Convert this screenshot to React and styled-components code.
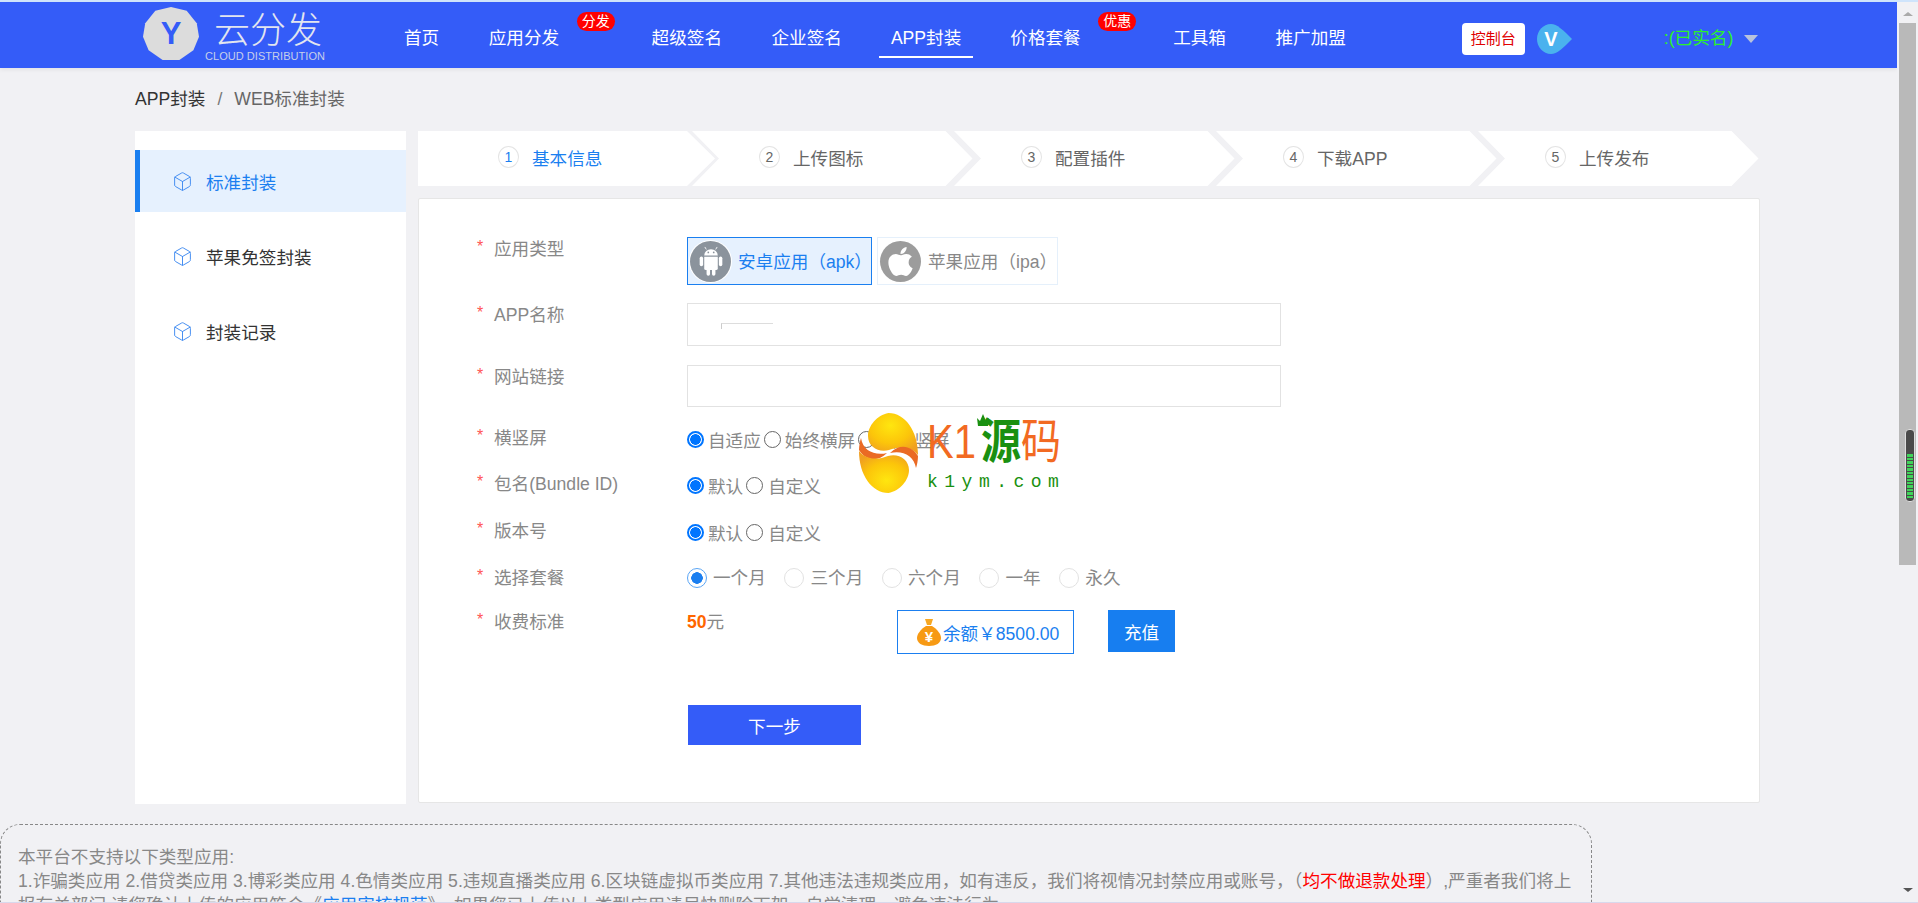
import React from 'react'
import styled, { createGlobalStyle } from 'styled-components'
import { Box } from 'lucide-react'
import { FaApple } from 'react-icons/fa'

const navItems = [
  { text: '首页', gap: 49.5 },
  { text: '应用分发', gap: 92.5 },
  { text: '超级签名', gap: 49.5 },
  { text: '企业签名', gap: 37 },
  { text: 'APP封装', gap: 37, active: true },
  { text: '价格套餐', gap: 92.5 },
  { text: '工具箱', gap: 49.5 },
  { text: '推广加盟', gap: 0 },
]
const navBadges = { 应用分发: '分发', 价格套餐: '优惠' }
const steps = ['基本信息', '上传图标', '配置插件', '下载APP', '上传发布']
const sideItems = ['标准封装', '苹果免签封装', '封装记录']
const periods = ['一个月', '三个月', '六个月', '一年', '永久']

const Global = createGlobalStyle`
  html, body { margin: 0; padding: 0; overflow: hidden; }
  body { font-family: "Liberation Sans", "Noto Sans CJK SC", sans-serif; font-size: 17.6px; background: #f1f1f4; }
  * { box-sizing: border-box; }
`
const Page = styled.div`
  width: 1918px;
  height: 903px;
  display: flex;
  flex-direction: column;
  overflow: hidden;
  background: #f1f1f4;
`
const TopStripe = styled.div`
  height: 2px;
  flex: none;
  background: #cfe4fb;
`
const BottomStripe = styled.div`
  height: 1px;
  flex: none;
  background: #d8d8ec;
`
const Body = styled.div`
  flex: 1;
  min-height: 0;
  display: flex;
`
const Main = styled.div`
  width: 1897px;
  flex: none;
  overflow: hidden;
  position: relative;
`
const Header = styled.header`
  height: 66px;
  background: #345cf8;
  display: flex;
  padding-left: 143px;
  box-shadow: 0 2px 4px rgba(0, 0, 0, 0.06);
`
const Logo = styled.div`
  width: 261px;
  flex: none;
  display: flex;
  padding-top: 5px;
`
const LogoBadge = styled.div`
  width: 56px;
  height: 54px;
  background: #dcdcdc;
  clip-path: polygon(50% 0, 78% 7%, 96% 30%, 100% 55%, 90% 80%, 65% 98%, 35% 98%, 10% 80%, 0 55%, 4% 30%, 22% 7%);
  display: flex;
  align-items: center;
  justify-content: center;
  color: #345cf8;
  font-size: 31px;
  font-weight: 700;
`
const LogoWords = styled.div`
  margin-left: 6px;
  display: flex;
  flex-direction: column;
`
const LogoName = styled.div`
  margin: 5px 0 0 9px;
  font-size: 36px;
  line-height: 38px;
  font-weight: 300;
  color: #e2e5ef;
  white-space: nowrap;
`
const LogoSub = styled.div`
  margin-top: 0;
  font-size: 11px;
  line-height: 12px;
  letter-spacing: 0.05px;
  color: #c6cfea;
  white-space: nowrap;
`
const Nav = styled.nav`
  display: flex;
`
const NavItem = styled.a`
  position: relative;
  height: 56px;
  padding: 24px ${p => (p.$active ? 12 : 0)}px 0;
  margin-right: ${p => p.$gap}px;
  line-height: 24px;
  color: #fff;
  white-space: nowrap;
  border-bottom: 2px solid ${p => (p.$active ? '#fff' : 'transparent')};
`
const NavBadge = styled.span`
  position: absolute;
  left: 88px;
  top: 10px;
  width: 38px;
  height: 19px;
  border-radius: 10px;
  background: #f00;
  color: #fff;
  font-size: 14px;
  line-height: 19px;
  text-align: center;
`
const ConsoleButton = styled.a`
  margin: 21px 0 0 116px;
  width: 63px;
  height: 32px;
  border-radius: 4px;
  background: #fff;
  color: #e00000;
  font-size: 15px;
  line-height: 32px;
  text-align: center;
`
const VipIcon = styled.svg`
  margin: 22px 0 0 12px;
  width: 35px;
  height: 30px;
`
const UserName = styled.span`
  margin: 24px 0 0 92px;
  width: 74px;
  line-height: 24px;
  color: #2cf02c;
  white-space: nowrap;
`
const Caret = styled.span`
  margin: 33px 0 0 6px;
  width: 0;
  height: 0;
  border-left: 7px solid transparent;
  border-right: 7px solid transparent;
  border-top: 8px solid #b8c2dc;
`
const Breadcrumb = styled.div`
  height: 63px;
  padding-left: 135px;
  line-height: 62px;
  color: #666;
`
const Crumb = styled.span`
  color: #333;
`
const CrumbSlash = styled.span`
  margin: 0 12px;
  color: #777;
`
const Columns = styled.div`
  display: flex;
  gap: 12px;
  padding-left: 135px;
`
const Sidebar = styled.aside`
  width: 271px;
  height: 673px;
  flex: none;
  background: #fff;
  padding-top: 19px;
  display: flex;
  flex-direction: column;
  gap: 13px;
`
const SideItem = styled.a`
  height: 62px;
  display: flex;
  align-items: center;
  gap: 13px;
  padding-left: 32px;
  border-left: 5px solid ${p => (p.$active ? '#1a7ff0' : 'transparent')};
  background: ${p => (p.$active ? '#e6f1fe' : 'transparent')};
  color: ${p => (p.$active ? '#1b7ff0' : '#333')};
  svg { color: #3f8af0; }
`
const Content = styled.div`
  width: 1342px;
  flex: none;
`
const Steps = styled.div`
  height: 55px;
  display: flex;
`
const Step = styled.div`
  width: ${p => (p.$first ? 297 : 280.5)}px;
  flex: none;
  margin-left: ${p => (p.$first ? 0 : -18.5)}px;
  margin-right: ${p => (p.$first ? -4.5 : 0)}px;
  padding: 0 0 3px ${p => (p.$first ? 80 : 67)}px;
  display: flex;
  align-items: center;
  gap: 13px;
  background: #fff;
  color: ${p => (p.$first ? '#1b7ff0' : '#666')};
  clip-path: ${p =>
    p.$first
      ? 'polygon(0 0, calc(100% - 28px) 0, 100% 50%, calc(100% - 28px) 100%, 0 100%)'
      : 'polygon(0 0, calc(100% - 27px) 0, 100% 50%, calc(100% - 27px) 100%, 0 100%, 27px 50%)'};
`
const StepNumber = styled.span`
  width: 21px;
  height: 22px;
  border: 1px solid #e4e4e4;
  border-radius: 50%;
  font-size: 14px;
  line-height: 20px;
  text-align: center;
`
const Card = styled.section`
  position: relative;
  margin-top: 12px;
  height: 605px;
  background: #fff;
  border: 1px solid #e6e6e6;
  border-radius: 2px;
  padding: 38px 0 0 58px;
`
const Row = styled.div`
  height: ${p => p.$h}px;
  display: flex;
  align-items: flex-start;
`
const Star = styled.span`
  width: 17px;
  flex: none;
  padding-top: 1px;
  color: #f55;
  font-size: 16px;
  line-height: 18px;
`
const Label = styled.label`
  width: 193px;
  flex: none;
  color: #888;
  line-height: 24px;
  white-space: nowrap;
`
const Tiles = styled.div`
  display: flex;
  gap: 5px;
`
const Tile = styled.div`
  width: ${p => (p.$on ? 185 : 181)}px;
  height: 48px;
  display: flex;
  align-items: center;
  gap: 7px;
  padding: 0 0 2px 2px;
  border: 1px solid ${p => (p.$on ? '#1a7ff0' : '#e5f0fb')};
  background: ${p => (p.$on ? '#e6f1fe' : '#fff')};
  color: ${p => (p.$on ? '#1b7ff0' : '#888')};
  white-space: nowrap;
`
const TileIcon = styled.span`
  width: 41px;
  height: 41px;
  flex: none;
  margin-top: 2px;
  border-radius: 50%;
  background: ${p => (p.$on ? '#8b939c' : '#9c9c9c')};
  box-shadow: 0 0 0 1px #fff;
  color: #fff;
  display: flex;
  align-items: center;
  justify-content: center;
`
const TextInput = styled.input`
  width: 594px;
  height: ${p => p.$h}px;
  border: 1px solid #e2e2e2;
  background: #fff;
  outline: none;
`
const InputWrap = styled.div`
  position: relative;
`
const InputMark = styled.span`
  position: absolute;
  left: 34px;
  top: 20px;
  width: 52px;
  height: 6px;
  border-left: 1px solid #ccc;
  border-top: 1px solid #ddd;
`
const RadioRow = styled.div`
  display: flex;
  align-items: center;
  gap: 3px;
  height: 26px;
  color: #888;
  white-space: nowrap;
`
const RadioItem = styled.label`
  display: flex;
  align-items: center;
  gap: ${p => p.$gap}px;
`
const NativeRadio = styled.input`
  appearance: none;
  margin: 0;
  width: 17px;
  height: 17px;
  border-radius: 50%;
  border: 1px solid #666;
  background: #fff;
  &:checked {
    border: 2px solid #0075ff;
    background: radial-gradient(circle, #0075ff 0 5px, #fff 5.6px);
  }
`
const PeriodRow = styled.div`
  display: flex;
  gap: 18.7px;
  color: #888;
  white-space: nowrap;
`
const PeriodItem = styled.label`
  display: flex;
  align-items: center;
  gap: 6px;
  line-height: 24px;
`
const PeriodRadio = styled.input`
  appearance: none;
  margin: 0;
  width: 20px;
  height: 20px;
  border-radius: 50%;
  border: 1px solid #e2e2e2;
  background: #fff;
  &:checked {
    border: 1.5px solid #5aa5f5;
    background: radial-gradient(circle, #1b7ff0 0 5.5px, #fff 6px);
  }
`
const Price = styled.div`
  width: 210px;
  flex: none;
  line-height: 24px;
  color: #888;
  b { color: #f60; }
`
const Balance = styled.div`
  width: 177px;
  height: 44px;
  flex: none;
  margin-right: 34px;
  display: flex;
  align-items: center;
  padding-left: 18px;
  gap: 1px;
  border: 1px solid #1b7ff0;
  color: #1b7ff0;
  white-space: nowrap;
`
const Recharge = styled.button`
  width: 67px;
  height: 42px;
  border: 0;
  background: #177ef0;
  color: #fff;
  font: inherit;
`
const NextButton = styled.button`
  width: 173px;
  height: 40px;
  margin-left: 211px;
  border: 0;
  background: #345cf8;
  color: #fff;
  font: inherit;
`
const Notice = styled.div`
  width: 1592px;
  margin-top: 20px;
  height: 200px;
  padding: 20px 0 0 17px;
  border: 1px dashed #888;
  border-radius: 20px;
  color: #888;
  line-height: 24px;
  white-space: nowrap;
  a { color: #1b7ff0; }
  em { color: #f00; font-style: normal; }
`
const Watermark = styled.div`
  position: absolute;
  left: 859px;
  top: 407px;
  width: 205px;
  height: 84px;
  display: flex;
`
const MarkWords = styled.div`
  position: relative;
  margin-left: 9px;
  width: 137px;
`
const MarkTitle = styled.div`
  margin-top: 8px;
  height: 46px;
  line-height: 40px;
  font-size: 40px;
  display: flex;
  color: #f26a22;
  white-space: nowrap;
  transform: scaleY(1.2);
  transform-origin: top left;
`
const MarkK = styled.span`
  width: 54px;
  font-weight: 400;
`
const MarkGreen = styled.span`
  color: #1a9010;
  font-weight: 700;
`
const MarkCrown = styled.svg`
  position: absolute;
  left: 49px;
  top: 4px;
  width: 14px;
  height: 14px;
`
const MarkSite = styled.div`
  margin-top: 10px;
  font-family: "Liberation Mono", monospace;
  font-size: 18px;
  line-height: 18px;
  letter-spacing: 6.5px;
  color: #1a9010;
  white-space: nowrap;
`
const Rail = styled.div`
  width: 21px;
  flex: none;
  display: flex;
  flex-direction: column;
  align-items: center;
  position: relative;
`
const ArrowUp = styled.span`
  margin-top: 10px;
  width: 0;
  height: 0;
  border-left: 5px solid transparent;
  border-right: 5px solid transparent;
  border-bottom: 4px solid #aaa;
`
const Track = styled.div`
  margin-top: 7px;
  width: 17px;
  height: 542px;
  background: #b9b9b9;
  position: relative;
`
const Thumb = styled.div`
  position: absolute;
  left: 6px;
  top: 406px;
  width: 10px;
  height: 73px;
  border: 1px solid #ddd;
  border-radius: 4px;
  padding: 24px 1px 3px;
  background: #4a4a4a;
`
const ThumbLines = styled.div`
  height: 100%;
  background: repeating-linear-gradient(#3fd45a 0 2.5px, #4a4a4a 2.5px 3.5px);
`
const ArrowDown = styled.span`
  margin-top: 323px;
  width: 0;
  height: 0;
  border-left: 5px solid transparent;
  border-right: 5px solid transparent;
  border-top: 4px solid #555;
`

const AndroidRobot = () => (
  <svg width="30" height="32" viewBox="0 0 24 26" fill="#fff">
    <path d="M6.5 8.5a5.5 5 0 0 1 11 0z" />
    <path d="M8.2 3.6L7 1.6M15.8 3.6L17 1.6" stroke="#fff" strokeWidth="0.7" />
    <circle cx="9.8" cy="6" r="0.7" fill="#8b939c" />
    <circle cx="14.2" cy="6" r="0.7" fill="#8b939c" />
    <path d="M6.5 9.5h11v9.5a1.4 1.4 0 0 1-1.4 1.4H7.9a1.4 1.4 0 0 1-1.4-1.4z" />
    <rect x="2.8" y="9.3" width="2.8" height="8" rx="1.4" />
    <rect x="18.4" y="9.3" width="2.8" height="8" rx="1.4" />
    <rect x="8.4" y="19" width="2.8" height="6" rx="1.4" />
    <rect x="12.8" y="19" width="2.8" height="6" rx="1.4" />
  </svg>
)

const MoneyBag = () => (
  <svg width="26" height="28" viewBox="0 0 26 28">
    <path d="M9 1h8l-2 6h-4z" fill="#f7a823" />
    <path d="M10 8h6c5 3 9 8 9 12 0 5-5 8-12 8S1 25 1 20c0-4 4-9 9-12z" fill="#f79a14" />
    <text x="13" y="24" fontSize="15" fontWeight="700" fill="#fff" textAnchor="middle">¥</text>
  </svg>
)

const SwooshLogo = () => (
  <svg width="59" height="80" viewBox="0 0 59 80" style={{ marginTop: 4 }}>
    <defs>
      <radialGradient id="gold" cx="0.45" cy="0.3" r="0.7">
        <stop offset="0" stopColor="#ffe60f" />
        <stop offset="0.6" stopColor="#fcc50a" />
        <stop offset="1" stopColor="#f0a020" />
      </radialGradient>
      <g id="lobe">
        <path d="M29.5 0C46 0 59 18 59 42 52 33 40 33 30 37 20 40 9 34 9 23 9 13 18 2 29.5 0Z" fill="url(#gold)" />
        <path d="M0 37C0 33 1 28 2 25 4 38 16 43 28 40 18 50 6 47 0 37Z" fill="#ea6a24" />
      </g>
    </defs>
    <use href="#lobe" />
    <use href="#lobe" transform="rotate(180 29.5 40)" />
  </svg>
)

const RadioGroup = ({ name, options }) => (
  <RadioRow>
    {options.map((o, i) => (
      <RadioItem key={o.text} $gap={o.gap}>
        <NativeRadio type="radio" name={name} defaultChecked={i === 0} />
        {o.text}
      </RadioItem>
    ))}
  </RadioRow>
)

export default function App() {
  return (
    <Page>
      <Global />
      <TopStripe />
      <Body>
        <Main>
          <Header>
            <Logo>
              <LogoBadge>Y</LogoBadge>
              <LogoWords>
                <LogoName>云分发</LogoName>
                <LogoSub>CLOUD DISTRIBUTION</LogoSub>
              </LogoWords>
            </Logo>
            <Nav>
              {navItems.map(n => (
                <NavItem key={n.text} $gap={n.gap} $active={n.active}>
                  {n.text}
                  {navBadges[n.text] && <NavBadge>{navBadges[n.text]}</NavBadge>}
                </NavItem>
              ))}
            </Nav>
            <ConsoleButton>控制台</ConsoleButton>
            <VipIcon viewBox="0 0 35 30">
              <path d="M14 0C20 0 26 6 35 15 26 24 20 30 14 30 6 30 0 23 0 15S6 0 14 0Z" fill="#4ab2ee" />
              <text x="14" y="22" fontSize="20" fontWeight="700" fill="#fff" textAnchor="middle">V</text>
            </VipIcon>
            <UserName>:(已实名)</UserName>
            <Caret />
          </Header>
          <Breadcrumb>
            <Crumb>APP封装</Crumb>
            <CrumbSlash>/</CrumbSlash>
            WEB标准封装
          </Breadcrumb>
          <Columns>
            <Sidebar>
              {sideItems.map((s, i) => (
                <SideItem key={s} $active={i === 0}>
                  <Box size={21} strokeWidth={1.1} />
                  {s}
                </SideItem>
              ))}
            </Sidebar>
            <Content>
              <Steps>
                {steps.map((s, i) => (
                  <Step key={s} $first={i === 0}>
                    <StepNumber>{i + 1}</StepNumber>
                    {s}
                  </Step>
                ))}
              </Steps>
              <Card>
                <Row $h={66}>
                  <Star>*</Star>
                  <Label>应用类型</Label>
                  <Tiles>
                    <Tile $on>
                      <TileIcon $on><AndroidRobot /></TileIcon>
                      安卓应用（apk）
                    </Tile>
                    <Tile>
                      <TileIcon><FaApple size={33} /></TileIcon>
                      苹果应用（ipa）
                    </Tile>
                  </Tiles>
                </Row>
                <Row $h={62}>
                  <Star>*</Star>
                  <Label>APP名称</Label>
                  <InputWrap>
                    <TextInput $h={43} />
                    <InputMark />
                  </InputWrap>
                </Row>
                <Row $h={61}>
                  <Star>*</Star>
                  <Label>网站链接</Label>
                  <TextInput $h={42} />
                </Row>
                <Row $h={46}>
                  <Star>*</Star>
                  <Label>横竖屏</Label>
                  <RadioGroup
                    name="screen"
                    options={[
                      { text: '自适应', gap: 4 },
                      { text: '始终横屏', gap: 4 },
                      { text: '始终竖屏', gap: 4 },
                    ]}
                  />
                </Row>
                <Row $h={47}>
                  <Star>*</Star>
                  <Label>包名(Bundle ID)</Label>
                  <RadioGroup
                    name="bundle"
                    options={[
                      { text: '默认', gap: 4 },
                      { text: '自定义', gap: 5 },
                    ]}
                  />
                </Row>
                <Row $h={47}>
                  <Star>*</Star>
                  <Label>版本号</Label>
                  <RadioGroup
                    name="version"
                    options={[
                      { text: '默认', gap: 4 },
                      { text: '自定义', gap: 5 },
                    ]}
                  />
                </Row>
                <Row $h={44}>
                  <Star>*</Star>
                  <Label>选择套餐</Label>
                  <PeriodRow>
                    {periods.map((p, i) => (
                      <PeriodItem key={p}>
                        <PeriodRadio type="radio" name="period" defaultChecked={i === 0} />
                        {p}
                      </PeriodItem>
                    ))}
                  </PeriodRow>
                </Row>
                <Row $h={95}>
                  <Star>*</Star>
                  <Label>收费标准</Label>
                  <Price><b>50</b>元</Price>
                  <Balance>
                    <MoneyBag />
                    余额￥8500.00
                  </Balance>
                  <Recharge>充值</Recharge>
                </Row>
                <NextButton>下一步</NextButton>
              </Card>
            </Content>
          </Columns>
          <Notice>
            <div>本平台不支持以下类型应用:</div>
            <div>
              1.诈骗类应用 2.借贷类应用 3.博彩类应用 4.色情类应用 5.违规直播类应用 6.区块链虚拟币类应用 7.其他违法违规类应用，如有违反，我们将视情况封禁应用或账号，（<em>均不做退款处理</em>）,严重者我们将上
            </div>
            <div>
              报有关部门,请您确认上传的应用符合《<a>应用审核规范</a>》，如果您已上传以上类型应用请尽快删除下架，自觉清理，避免违法行为
            </div>
          </Notice>
          <Watermark>
            <SwooshLogo />
            <MarkWords>
              <MarkTitle>
                <MarkK>K1</MarkK>
                <MarkGreen>源</MarkGreen>码
              </MarkTitle>
              <MarkCrown viewBox="0 0 14 14">
                <path d="M1 5l3 3 3-7 3 7 3-3-1 8H2z" fill="#1a9010" />
              </MarkCrown>
              <MarkSite>k1ym.com</MarkSite>
            </MarkWords>
          </Watermark>
        </Main>
        <Rail>
          <ArrowUp />
          <Track>
            <Thumb>
              <ThumbLines />
            </Thumb>
          </Track>
          <ArrowDown />
        </Rail>
      </Body>
      <BottomStripe />
    </Page>
  )
}
